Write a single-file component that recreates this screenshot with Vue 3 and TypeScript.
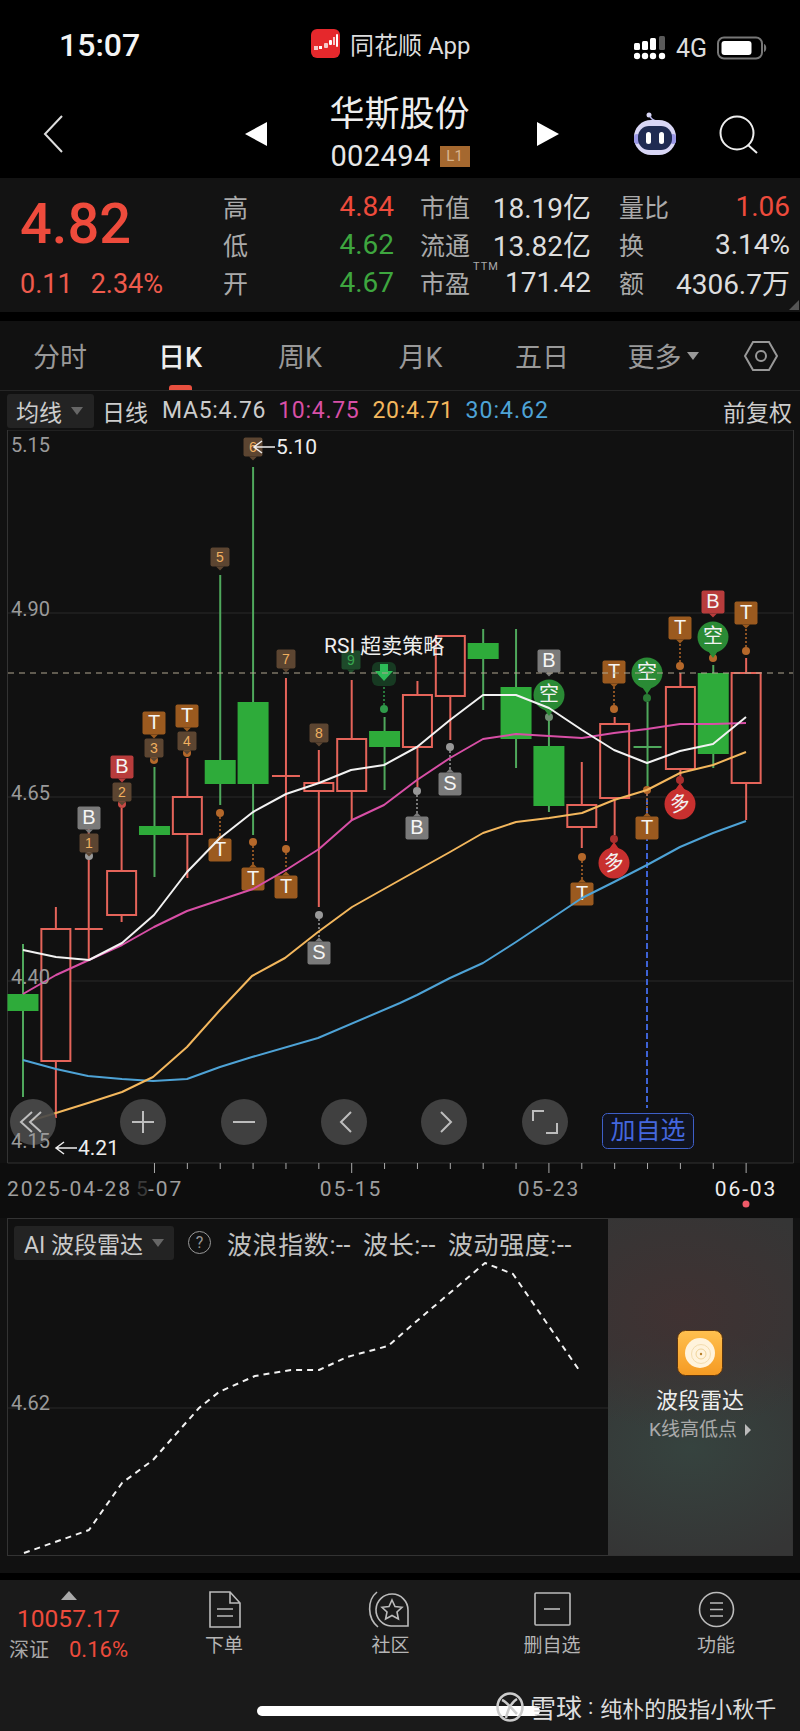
<script setup lang="ts">
type Row = [number, number, number, number, boolean]
type TagKind = 'num' | 'numg' | 't' | 'b' | 'g'
type Tag = { x: number; y: number; label: string; kind: TagKind; up?: boolean }
type Ball = { x: number; y: number; label: string; red: boolean }
type Dot = { x: number; y: number; to: number; color: string }

const cx = (i: number) => 23 + 32.87 * i

// hi, lo, body top, body bottom, rising
const rows: Row[] = [
  [944, 1097, 994, 1011, false],
  [907, 1118, 929, 1061, true],
  [810, 960, 929, 929, true],
  [808, 922, 871, 915, true],
  [767, 877, 826, 835, false],
  [758, 878, 797, 834, true],
  [575, 805, 760, 784, false],
  [467, 835, 702, 784, false],
  [678, 841, 776, 776, true],
  [750, 907, 783, 791, true],
  [680, 820, 739, 791, true],
  [717, 790, 731, 747, false],
  [681, 787, 695, 747, true],
  [636, 740, 636, 696, true],
  [629, 710, 643, 659, false],
  [629, 768, 687, 739, false],
  [720, 812, 746, 806, false],
  [762, 848, 805, 827, true],
  [717, 835, 724, 798, true],
  [702, 790, 747, 747, false],
  [673, 777, 687, 769, true],
  [665, 768, 673, 754, false],
  [658, 820, 673, 783, true],
]

const candles = rows.map(([hi, lo, top, bot, up], i) => ({ x: cx(i), hi, lo, top, bot, up }))

const ma5 = '23,950 56,957 89,960 122,943 154,915 187,872 220,838 253,812 286,794 319,783 351,770 384,765 417,747 450,720 483,695 516,695 549,708 582,730 614,750 647,763 680,751 713,744 746,717'
const ma10 = '23,994 56,975 89,960 122,945 154,927 187,911 220,900 253,889 286,870 319,849 352,820 384,805 417,780 450,758 483,739 516,734 549,736 582,738 614,733 647,729 680,724 713,724 746,723'
const ma20 = '33,1120 56,1113 88,1103 122,1092 153,1077 187,1047 220,1010 252,976 285,958 318,932 352,907 400,880 450,852 483,833 516,822 549,818 582,813 614,800 647,790 680,773 713,765 746,752'
const ma30 = '23,1060 56,1069 88,1076 122,1079 153,1081 187,1079 220,1067 252,1057 318,1038 400,1003 417,995 450,978 483,963 516,942 549,920 582,898 614,882 647,865 680,847 713,833 746,821'
const wave = '24,1553 89,1530 122,1483 153,1460 199,1408 219,1392 255,1376 291,1370 319,1370 347,1357 388,1346 418,1320 485,1263 513,1274 579,1370'

const orange = '#b5682a'
const gray = '#999'

const dots: Dot[] = [
  { x: 89, y: 856, to: 852, color: gray },
  { x: 122, y: 804, to: 801, color: '#c94a45' },
  { x: 154, y: 760, to: 757, color: orange },
  { x: 187, y: 753, to: 750, color: orange },
  { x: 220, y: 813, to: 838, color: orange },
  { x: 253, y: 842, to: 867, color: orange },
  { x: 286, y: 849, to: 875, color: orange },
  { x: 319, y: 915, to: 941, color: gray },
  { x: 384, y: 709, to: 684, color: '#2f9a4a' },
  { x: 417, y: 791, to: 816, color: gray },
  { x: 450, y: 747, to: 772, color: gray },
  { x: 549, y: 717, to: 711, color: '#6f8f72' },
  { x: 582, y: 857, to: 882, color: orange },
  { x: 614, y: 709, to: 684, color: orange },
  { x: 614, y: 839, to: 847, color: '#a92f2e' },
  { x: 647, y: 698, to: 690, color: '#2a7a35' },
  { x: 647, y: 790, to: 816, color: orange },
  { x: 680, y: 666, to: 640, color: orange },
  { x: 680, y: 780, to: 788, color: '#a92f2e' },
  { x: 713, y: 658, to: 653, color: orange },
  { x: 746, y: 651, to: 625, color: orange },
]

const tags: Tag[] = [
  { x: 89, y: 843, label: '1', kind: 'num' },
  { x: 122, y: 792, label: '2', kind: 'num' },
  { x: 154, y: 748, label: '3', kind: 'num' },
  { x: 187, y: 741, label: '4', kind: 'num' },
  { x: 220, y: 557, label: '5', kind: 'num' },
  { x: 253, y: 447, label: '6', kind: 'num' },
  { x: 286, y: 659, label: '7', kind: 'num' },
  { x: 319, y: 733, label: '8', kind: 'num' },
  { x: 351, y: 660, label: '9', kind: 'numg' },
  { x: 89, y: 818, label: 'B', kind: 'g' },
  { x: 122, y: 767, label: 'B', kind: 'b' },
  { x: 154, y: 723, label: 'T', kind: 't' },
  { x: 187, y: 716, label: 'T', kind: 't' },
  { x: 220, y: 850, label: 'T', kind: 't', up: true },
  { x: 253, y: 879, label: 'T', kind: 't', up: true },
  { x: 286, y: 887, label: 'T', kind: 't', up: true },
  { x: 319, y: 953, label: 'S', kind: 'g', up: true },
  { x: 417, y: 828, label: 'B', kind: 'g', up: true },
  { x: 450, y: 784, label: 'S', kind: 'g', up: true },
  { x: 549, y: 661, label: 'B', kind: 'g' },
  { x: 582, y: 894, label: 'T', kind: 't', up: true },
  { x: 614, y: 672, label: 'T', kind: 't' },
  { x: 647, y: 828, label: 'T', kind: 't', up: true },
  { x: 680, y: 628, label: 'T', kind: 't' },
  { x: 713, y: 602, label: 'B', kind: 'b' },
  { x: 746, y: 613, label: 'T', kind: 't' },
]

const balls: Ball[] = [
  { x: 549, y: 695, label: '空', red: false },
  { x: 647, y: 673, label: '空', red: false },
  { x: 713, y: 637, label: '空', red: false },
  { x: 614, y: 863, label: '多', red: true },
  { x: 680, y: 804, label: '多', red: true },
]

const tagPath = (t: Tag) => {
  const r = t.kind === 'num' || t.kind === 'numg' ? 9.5 : 11.5
  const tip = t.up ? t.y - r - 4 : t.y + r + 4
  const edge = t.up ? t.y - r : t.y + r
  return {
    r,
    tri: `${t.x - 4},${edge} ${t.x + 4},${edge} ${t.x},${tip}`,
  }
}

const ticks = Array.from({ length: 19 }, (_, i) => ({
  x: cx(4 + i),
  big: i % 6 === 0,
}))

const grid = [613, 797, 981]
const priceLabels = [
  { y: 447, t: '5.15' },
  { y: 611, t: '4.90' },
  { y: 795, t: '4.65' },
  { y: 979, t: '4.40' },
  { y: 1143, t: '4.15' },
]

const dates = [
  { x: 351, t: '05-15' },
  { x: 549, t: '05-23' },
]

const tabs = ['分时', '日K', '周K', '月K', '五日']

const stats = [
  { a: '高', av: '4.84', ac: 'red', b: '市值', bv: '18.19亿', c: '量比', cv: '1.06', cc: 'red' },
  { a: '低', av: '4.62', ac: 'green', b: '流通', bv: '13.82亿', c: '换', cv: '3.14%', cc: '' },
  { a: '开', av: '4.67', ac: 'green', b: '市盈', bv: '171.42', c: '额', cv: '4306.7万', cc: '' },
]

const circleBtns = [143, 244, 344, 444, 545]
</script>

<template>
  <div class="phone">
    <header class="top">
      <div class="status">
        <span class="time">15:07</span>
        <div class="app">
          <svg width="29" height="29" viewBox="0 0 29 29">
            <rect width="29" height="29" rx="6" fill="#e5282c" />
            <rect x="3" y="17" width="4" height="4" fill="#f6c9c9" />
            <rect x="8" y="17" width="3" height="3" fill="#fff" />
            <rect x="13" y="14" width="4" height="5" rx="1" fill="#f6c9c9" />
            <rect x="18" y="11" width="3" height="5" rx="1" fill="#fff" />
            <rect x="22" y="8" width="2" height="8" fill="#f6c9c9" />
            <rect x="25" y="5" width="2" height="13" rx="1" fill="#fff" />
          </svg>
          <span>同花顺 App</span>
        </div>
        <div class="signal">
          <svg width="32" height="24" viewBox="0 0 32 24">
            <g fill="#fff">
              <rect x="0" y="7" width="6" height="7" rx="1.500" />
              <rect x="8" y="5" width="6" height="9" rx="1.500" />
              <rect x="16" y="2" width="6" height="12" rx="1.500" />
              <circle cx="3" cy="20" r="3.200" />
              <circle cx="11" cy="20" r="3.200" />
              <circle cx="19" cy="20" r="3.200" />
              <circle cx="28" cy="20" r="3.200" />
            </g>
            <rect x="25" y="0" width="6" height="14" rx="1.500" fill="#5a5a5a" />
          </svg>
          <span class="net">4G</span>
          <svg width="50" height="24" viewBox="0 0 50 24">
            <rect x="1" y="1.500" width="44" height="21" rx="6" fill="none" stroke="#777" stroke-width="2" />
            <rect x="4.500" y="5" width="30" height="14" rx="3" fill="#fff" />
            <path d="M47 8c3 1 3 7 0 8z" fill="#777" />
          </svg>
        </div>
      </div>

      <nav class="nav">
        <svg class="back" width="20" height="38" viewBox="0 0 20 38">
          <path d="M19 1L2 19l17 18" fill="none" stroke="#ddd" stroke-width="2" />
        </svg>
        <svg class="tri-l" width="22" height="24" viewBox="0 0 22 24"><path d="M22 0v24L0 12z" fill="#fff" /></svg>
        <div class="stock">
          <div class="name">华斯股份</div>
          <div class="code">002494 <span class="lvl">L1</span></div>
        </div>
        <svg width="22" height="24" viewBox="0 0 22 24"><path d="M0 0v24l22-12z" fill="#fff" /></svg>
        <svg class="robot" width="46" height="44" viewBox="0 0 46 44">
          <circle cx="17" cy="3" r="2.500" fill="#d8d6f5" />
          <path d="M18 4c1 3 3 4 6 5" stroke="#b9b7ea" stroke-width="1.500" fill="none" />
          <rect x="2" y="8" width="42" height="35" rx="17" fill="#d9d7f6" />
          <rect x="2" y="22" width="6" height="10" rx="3" fill="#9a97e6" />
          <rect x="38" y="22" width="6" height="10" rx="3" fill="#9a97e6" />
          <rect x="6" y="14" width="34" height="24" rx="11" fill="#1f2b52" />
          <rect x="14" y="20" width="5" height="12" rx="2.500" fill="#fff" />
          <rect x="27" y="20" width="5" height="12" rx="2.500" fill="#fff" />
        </svg>
        <svg class="search" width="39" height="39" viewBox="0 0 39 39">
          <circle cx="18" cy="18" r="16.500" fill="none" stroke="#eee" stroke-width="2" />
          <path d="M29 30l9 8" stroke="#eee" stroke-width="2" />
        </svg>
      </nav>
    </header>

    <section class="quote">
      <div class="last">
        <div class="price">4.82</div>
        <div class="chg"><span>0.11</span><span>2.34%</span></div>
      </div>
      <div class="stats">
        <template v-for="s in stats" :key="s.a">
          <div class="cell"><span class="lab">{{ s.a }}</span><span class="val" :class="s.ac">{{ s.av }}</span></div>
          <div class="cell second">
            <span class="lab">{{ s.b }}<sup v-if="s.b === '市盈'">TTM</sup></span><span class="val">{{ s.bv }}</span>
          </div>
          <div class="cell third"><span class="lab">{{ s.c }}</span><span class="val" :class="s.cc">{{ s.cv }}</span></div>
        </template>
      </div>
      <i class="corner"></i>
    </section>

    <div class="tabs">
      <div v-for="t in tabs" :key="t" class="tab" :class="{ on: t === '日K' }">{{ t }}</div>
      <div class="tab">更多<i class="caret"></i></div>
      <svg class="hex" width="34" height="30" viewBox="0 0 34 30">
        <path d="M9 1h16l8 14-8 14H9L1 15z" fill="none" stroke="#999" stroke-width="2" />
        <circle cx="17" cy="15" r="5" fill="none" stroke="#999" stroke-width="2" />
      </svg>
    </div>

    <div class="ma">
      <div class="picker">均线<i class="caret dim"></i></div>
      <span class="kind">日线</span>
      <span class="mv w">MA5:4.76</span>
      <span class="mv m">10:4.75</span>
      <span class="mv o">20:4.71</span>
      <span class="mv b">30:4.62</span>
      <span class="adj">前复权</span>
    </div>

    <svg class="chart" width="800" height="788" viewBox="0 430 800 788">
      <rect x="0" y="1163" width="800" height="55" fill="#0d0d0d" />
      <path d="M7.500 430H793.500V1163H7.500Z" fill="none" stroke="#333" />
      <line v-for="g in grid" :key="g" x1="8" x2="793" :y1="g" :y2="g" stroke="#2b2b2b" />

      <g v-for="c in candles" :key="c.x">
        <line :x1="c.x" :x2="c.x" :y1="c.hi" :y2="c.lo" :stroke="c.up ? '#e5645a' : '#4fa85c'" stroke-width="2" />
        <line v-if="c.top === c.bot" :x1="c.x - 14" :x2="c.x + 14" :y1="c.top" :y2="c.top"
          :stroke="c.up ? '#e5645a' : '#4fa85c'" stroke-width="2" />
        <rect v-else-if="c.up" :x="c.x - 14.5" :y="c.top" width="29" :height="c.bot - c.top"
          fill="#111" stroke="#e5645a" stroke-width="2" />
        <rect v-else :x="c.x - 15.5" :y="c.top" width="31" :height="c.bot - c.top" fill="#2eab3a" />
      </g>

      <line x1="647" x2="647" y1="790" y2="1108" stroke="#3e63d6" stroke-width="2" stroke-dasharray="6 3" />

      <line v-for="d in dots" :key="`l${d.x}${d.y}`" :x1="d.x" :x2="d.x" :y1="d.y" :y2="d.to"
        :stroke="d.color" stroke-width="1.500" stroke-dasharray="2 2" />
      <circle v-for="d in dots" :key="`d${d.x}${d.y}`" :cx="d.x" :cy="d.y" r="4" :fill="d.color" />

      <g v-for="t in tags" :key="`${t.x}${t.y}`">
        <polygon :points="tagPath(t).tri" :class="`fill-${t.kind}`" />
        <rect :x="t.x - tagPath(t).r" :y="t.y - tagPath(t).r" :width="tagPath(t).r * 2" :height="tagPath(t).r * 2"
          rx="2" :class="`fill-${t.kind}`" />
        <text :x="t.x" :y="t.y + 1" text-anchor="middle" dominant-baseline="middle" class="tagtext"
          :class="`txt-${t.kind}`">{{ t.label }}</text>
      </g>

      <g v-for="b in balls" :key="`${b.x}${b.y}`">
        <path :d="b.red ? `M${b.x - 5} ${b.y - 14}L${b.x} ${b.y - 21}L${b.x + 5} ${b.y - 14}Z` : `M${b.x - 5} ${b.y + 14}L${b.x} ${b.y + 21}L${b.x + 5} ${b.y + 14}Z`"
          :fill="b.red ? '#c8302f' : '#2a8a35'" />
        <circle :cx="b.x" :cy="b.y" r="15.500" :fill="b.red ? '#c8302f' : '#2a8a35'" />
        <text :x="b.x" :y="b.y + 1" text-anchor="middle" dominant-baseline="middle" class="balltext"
          :transform="b.red ? `rotate(-12 ${b.x} ${b.y})` : undefined">{{ b.label }}</text>
      </g>

      <rect x="372" y="662" width="24" height="24" rx="6" fill="#173a22" />
      <path d="M380 664h8v7h5l-9 10-9-10h5z" fill="#2dbb57" />

      <line x1="8" x2="793" y1="673" y2="673" stroke="#b0a690" stroke-dasharray="6 5" />

      <polyline :points="ma30" class="ln" stroke="#4ea3d6" />
      <polyline :points="ma20" class="ln" stroke="#f3b75d" />
      <polyline :points="ma10" class="ln" stroke="#d84fa6" />
      <polyline :points="ma5" class="ln" stroke="#f2f2f2" />

      <g opacity="0.92">
        <circle cx="33" cy="1122" r="23" fill="#4a4a4a" />
        <path d="M32 1112l-11 10 11 10M41 1112l-11 10 11 10" fill="none" stroke="#ccc" stroke-width="2" />
        <circle v-for="x in circleBtns" :key="x" :cx="x" cy="1122" r="23" fill="#444" />
        <path d="M132 1122h22M143 1111v22" stroke="#ccc" stroke-width="2" />
        <path d="M233 1122h22" stroke="#ccc" stroke-width="2" />
        <path d="M351 1112l-10 10 10 10" fill="none" stroke="#ccc" stroke-width="2" />
        <path d="M441 1112l10 10-10 10" fill="none" stroke="#ccc" stroke-width="2" />
        <path d="M533 1121v-10h11M557 1123v10h-11" fill="none" stroke="#ccc" stroke-width="2" />
      </g>

      <text v-for="p in priceLabels" :key="p.t" x="11" :y="p.y" dominant-baseline="middle" class="axis">{{ p.t }}</text>

      <path d="M254 447h21M262 441l-8 6 8 6" fill="none" stroke="#eee" stroke-width="1.500" />
      <text x="276" y="448" dominant-baseline="middle" class="note">5.10</text>
      <path d="M56 1148h21M64 1142l-8 6 8 6" fill="none" stroke="#eee" stroke-width="1.500" />
      <text x="78" y="1149" dominant-baseline="middle" class="note">4.21</text>
      <text x="324" y="647" dominant-baseline="middle" class="rsi">RSI 超卖策略</text>

      <rect x="602.500" y="1113.500" width="91" height="35" rx="5" fill="#10131f" stroke="#3e5fc8" />
      <text x="648" y="1132" text-anchor="middle" dominant-baseline="middle" class="add">加自选</text>

      <line v-for="t in ticks" :key="t.x" :x1="t.x" :x2="t.x" y1="1163" :y2="t.big ? 1173 : 1169" stroke="#aaa" />
      <text x="7" y="1190" dominant-baseline="middle" class="date">2025-04-28</text>
      <text x="136" y="1190" dominant-baseline="middle" class="date faded">5</text>
      <text x="148" y="1190" dominant-baseline="middle" class="date">-07</text>
      <text v-for="d in dates" :key="d.t" :x="d.x" y="1190" text-anchor="middle" dominant-baseline="middle" class="date">{{ d.t }}</text>
      <text x="746" y="1190" text-anchor="middle" dominant-baseline="middle" class="date now">06-03</text>
      <circle cx="746" cy="1204" r="3.500" fill="#ef5a68" />
    </svg>

    <section class="wave">
      <div class="frame">
        <div class="plot">
          <svg width="600" height="336" viewBox="8 1219 600 336">
            <line x1="8" x2="608" y1="1408" y2="1408" stroke="#2b2b2b" />
            <text x="11" y="1405" dominant-baseline="middle" class="axis">4.62</text>
            <polyline :points="wave" fill="none" stroke="#f2f2f2" stroke-width="2" stroke-dasharray="6 5" stroke-linejoin="round" />
          </svg>
          <div class="wave-head">
            <div class="picker ai">AI 波段雷达<i class="caret dim"></i></div>
            <span class="help">?</span>
            <span class="metric first">波浪指数:--</span>
            <span class="metric">波长:--</span>
            <span class="metric">波动强度:--</span>
          </div>
        </div>
        <aside class="promo">
          <svg width="46" height="46" viewBox="0 0 46 46">
            <defs>
              <linearGradient id="rad" x1="0" y1="0" x2="0" y2="1">
                <stop offset="0" stop-color="#ffc04f" />
                <stop offset="1" stop-color="#f59a22" />
              </linearGradient>
            </defs>
            <rect x="0.500" y="0.500" width="45" height="45" rx="8" fill="url(#rad)" stroke="#5a3410" />
            <circle cx="23" cy="23" r="15" fill="#fff3dc" />
            <circle cx="24" cy="24" r="9.500" fill="none" stroke="#f3dcae" />
            <circle cx="24" cy="24" r="5" fill="none" stroke="#efd39a" />
            <circle cx="24" cy="24" r="1.200" fill="#b9802a" />
          </svg>
          <div class="p-title">波段雷达</div>
          <div class="p-sub">K线高低点<i class="p-arrow"></i></div>
        </aside>
      </div>
    </section>

    <footer class="bar">
      <div class="index">
        <i class="up"></i>
        <div class="ipx">10057.17</div>
        <div class="irow"><span class="iname">深证</span><span class="ipct">0.16%</span></div>
      </div>
      <div class="act">
        <svg width="33" height="37" viewBox="0 0 33 37">
          <path d="M2 1h20l10 11v24H2zM22 1v11h10M9 18h16M9 25h16" fill="none" stroke="#bbb" stroke-width="1.600" />
        </svg>
        <span>下单</span>
      </div>
      <div class="act">
        <svg width="41" height="37" viewBox="0 0 41 37">
          <path d="M9 1C-1 9-1 27 10 36" fill="none" stroke="#bbb" stroke-width="1.600" />
          <path d="M40 35H23a16 16 0 1 1 17-16z" fill="none" stroke="#bbb" stroke-width="1.600" />
          <path d="M24 9l3 6.500 7 .8-5 4.700 1.400 7L24 24.500 17.600 28l1.400-7-5-4.700 7-.8z" fill="none" stroke="#bbb" stroke-width="1.600" />
        </svg>
        <span class="nudge">社区</span>
      </div>
      <div class="act">
        <svg width="37" height="37" viewBox="0 0 37 37">
          <rect x="1" y="2" width="35" height="32" rx="1" fill="none" stroke="#bbb" stroke-width="1.600" />
          <path d="M10 18h16" stroke="#bbb" stroke-width="1.600" />
        </svg>
        <span>删自选</span>
      </div>
      <div class="act">
        <svg width="37" height="37" viewBox="0 0 37 37">
          <circle cx="18.500" cy="18.500" r="17" fill="none" stroke="#bbb" stroke-width="1.600" />
          <path d="M12 12h13M12 18.500h13M12 25h13" stroke="#bbb" stroke-width="1.600" />
        </svg>
        <span>功能</span>
      </div>
      <i class="home"></i>
      <div class="mark">
        <svg width="28" height="30" viewBox="0 0 28 30">
          <ellipse cx="14" cy="15" rx="12.500" ry="13.500" fill="none" stroke="#ccc" stroke-width="2.500" />
          <path d="M6 8c5 2 10 9 15 14M21 7c-5 3-9 10-11 19" fill="none" stroke="#ccc" stroke-width="2.500" />
        </svg>
        <span class="brand">雪球</span>
        <span class="sep">:</span>
        <span class="author">纯朴的股指小秋千</span>
      </div>
    </footer>
  </div>
</template>

<style scoped>
.phone {
  position: relative;
  width: 800px;
  height: 1731px;
  overflow: hidden;
  background: #111;
  color: #ddd;
  font-family: Roboto, "Noto Sans CJK SC", sans-serif;
}

.top { background: #000; height: 178px; }
.status {
  display: flex;
  align-items: center;
  height: 90px;
  padding-left: 59px;
  padding-right: 33px;
}
.time { width: 252px; font-size: 32px; font-weight: 500; color: #f4f4f4; }
.app { display: flex; align-items: center; gap: 10px; margin-top: -4px; font-size: 24px; color: #ddd; }
.signal { display: flex; align-items: center; gap: 10px; margin-left: auto; margin-top: 6px; }
.net { font-size: 25px; color: #ddd; }

.nav { display: flex; align-items: center; height: 88px; padding-left: 43px; }
.tri-l { margin-left: 182px; }
.stock { width: 270px; display: flex; flex-direction: column; align-items: center; }
.name { margin-right: 5px; font-size: 35px; line-height: 44px; color: #eee; }
.code { margin-right: 4px; font-size: 29px; line-height: 38px; letter-spacing: 0.4px; color: #e6e6e6; display: flex; align-items: center; gap: 9px; }
.lvl {
  width: 30px;
  height: 21px;
  background: #a5682f;
  color: #d9b48c;
  font-size: 15px;
  line-height: 21px;
  letter-spacing: 0;
  text-align: center;
}
.robot { margin-left: 73px; }
.search { margin-left: 41px; }

.quote { position: relative; display: flex; height: 134px; background: #131313; }
.last { width: 223px; padding: 21px 0 0 20px; box-sizing: border-box; }
.price { font-size: 56px; line-height: 50px; font-weight: 500; color: #ee4b3c; }
.chg { display: flex; gap: 18px; margin-top: 19px; font-size: 27px; line-height: 32px; color: #ee5a4c; }
.stats {
  display: grid;
  grid-template-columns: 171px 197px 199px;
  grid-auto-rows: 38px;
  padding-top: 9px;
}
.cell { display: flex; justify-content: space-between; align-items: center; }
.second { margin-left: 26px; }
.third { margin-left: 28px; }
.lab { position: relative; font-size: 25px; color: #aaa; }
.lab sup { position: absolute; left: 100%; top: -3px; margin-left: 3px; font-size: 11px; color: #aaa; line-height: 1; letter-spacing: 1px; }
.val { font-size: 28px; color: #ddd; }
.val.red { color: #ee4b3c; }
.val.green { color: #3ea63f; }
.corner {
  position: absolute;
  right: 1px;
  bottom: 2px;
  border-left: 10px solid transparent;
  border-bottom: 10px solid #555;
}

.tabs {
  display: grid;
  grid-template-columns: 120px 120px 120px 121px 122px 120px 77px;
  align-items: center;
  height: 69px;
  margin-top: 9px;
  border-bottom: 1px solid #262626;
  box-sizing: content-box;
  box-shadow: 0 -9px 0 #000;
}
.tab {
  position: relative;
  display: flex;
  align-items: center;
  justify-content: center;
  height: 69px;
  font-size: 27px;
  color: #999;
}
.tab.on { color: #eee; font-weight: 500; }
.tab.on::after {
  content: "";
  position: absolute;
  left: 49px;
  bottom: 0;
  width: 23px;
  height: 5px;
  border-radius: 3px 3px 0 0;
  background: #e8503f;
}
.caret {
  display: inline-block;
  margin-left: 5px;
  border-left: 6px solid transparent;
  border-right: 6px solid transparent;
  border-top: 8px solid #999;
}
.caret.dim { border-top-color: #666; margin-left: 9px; }
.hex { margin-left: 21px; }

.ma { display: flex; align-items: center; height: 39px; padding-left: 7px; font-size: 23px; }
.picker {
  display: flex;
  align-items: center;
  height: 34px;
  width: 87px;
  padding-left: 9px;
  box-sizing: border-box;
  background: #232323;
  border-radius: 3px;
  font-size: 23px;
  color: #ccc;
}
.kind { margin-left: 8px; color: #ccc; }
.mv { letter-spacing: 0.7px; }
.mv.w { margin-left: 14px; color: #ccc; }
.mv.m { margin-left: 12px; color: #d84fa6; }
.mv.o { margin-left: 13px; color: #f3b75d; }
.mv.b { margin-left: 12px; color: #4ea3d6; letter-spacing: 1px; }
.adj { margin-left: auto; margin-right: 8px; color: #ccc; }

.chart { display: block; }
.ln { fill: none; stroke-width: 2; stroke-linejoin: round; }
.axis { font-size: 20px; fill: #9a9a9a; }
.note { font-size: 21px; fill: #eee; }
.rsi { font-size: 21px; fill: #eee; }
.add { font-size: 25px; fill: #4467de; }
.date { font-size: 21px; fill: #9e9e9e; letter-spacing: 1.9px; }
.date.faded { fill: #3a3a3a; }
.date.now { fill: #eee; }
.tagtext { font-size: 18px; font-family: "Liberation Sans", sans-serif; }
.balltext { font-size: 20px; fill: #f2f2f2; }
.fill-num { fill: #5c4531; }
.fill-numg { fill: #1e4a2a; }
.fill-t { fill: #9b5a1f; }
.fill-b { fill: #b83c3c; }
.fill-g { fill: #7a7a7a; }
.txt-num { font-size: 14px; fill: #f0b060; }
.txt-numg { font-size: 14px; fill: #38a850; }
.txt-t, .txt-b, .txt-g { fill: #f5f5f5; font-size: 20px; }

.wave { height: 355px; padding: 0 7px; box-sizing: border-box; }
.frame {
  display: flex;
  height: 338px;
  border: 1px solid #333;
  box-sizing: border-box;
}
.plot { position: relative; width: 600px; }
.plot svg { display: block; }
.wave-head {
  position: absolute;
  left: 6px;
  top: 6px;
  display: flex;
  align-items: center;
  height: 35px;
  font-size: 25px;
  color: #c2c2c2;
}
.picker.ai { width: 160px; white-space: nowrap; padding-left: 10px; }
.help {
  width: 23px;
  height: 23px;
  margin-left: 14px;
  border: 1.5px solid #999;
  border-radius: 50%;
  box-sizing: border-box;
  text-align: center;
  line-height: 21px;
  font-size: 16px;
  color: #999;
}
.metric { margin-left: 12px; white-space: nowrap; letter-spacing: 0.6px; }
.metric.first { margin-left: 16px; }
.promo {
  flex: 1;
  display: flex;
  flex-direction: column;
  align-items: center;
  padding-top: 111px;
  box-sizing: border-box;
  background:
    radial-gradient(ellipse 90% 35% at 40% 28%, #403232, transparent),
    radial-gradient(ellipse 90% 35% at 45% 68%, #36433f, transparent),
    #353535;
}
.p-title { margin-top: 9px; font-size: 22px; line-height: 32px; color: #eee; }
.p-sub { font-size: 19px; line-height: 26px; color: #aaa; display: flex; align-items: center; }
.p-arrow {
  margin-left: 8px;
  border-top: 6px solid transparent;
  border-bottom: 6px solid transparent;
  border-left: 6px solid #bbb;
}

.bar {
  position: relative;
  display: flex;
  height: 151px;
  margin-top: 7px;
  padding-left: 142px;
  background: #1a1a1a;
  box-sizing: border-box;
  box-shadow: 0 -7px 0 #000;
}
.index {
  position: absolute;
  left: 0;
  top: 11px;
  width: 137px;
  display: flex;
  flex-direction: column;
  align-items: center;
}
.up {
  border-left: 8px solid transparent;
  border-right: 8px solid transparent;
  border-bottom: 9px solid #aaa;
}
.ipx { font-size: 24.5px; line-height: 36px; color: #ee4b3c; margin-top: 1px; }
.irow { display: flex; gap: 20px; align-items: center; line-height: 26px; }
.iname { font-size: 20px; color: #a8a8a8; }
.ipct { font-size: 22px; color: #ee4b3c; }
.act {
  width: 164px;
  display: flex;
  flex-direction: column;
  align-items: center;
  padding-top: 11px;
  font-size: 19px;
  color: #b5b5b5;
}
.act svg { height: 37px; }
.act span { margin-top: 3px; line-height: 30px; }
.act .nudge { margin-left: 5px; }
.mark {
  position: absolute;
  left: 496px;
  top: 108px;
  display: flex;
  align-items: center;
  color: #ddd;
  white-space: nowrap;
}
.brand { margin-left: 6px; font-size: 26px; }
.sep { margin: 0 7px 0 6px; font-size: 22px; }
.author { font-size: 22px; }
.home {
  position: absolute;
  left: 257px;
  top: 126px;
  width: 283px;
  height: 10px;
  border-radius: 5px;
  background: #fff;
}
</style>

<style>
html, body { background: #111; }
</style>
